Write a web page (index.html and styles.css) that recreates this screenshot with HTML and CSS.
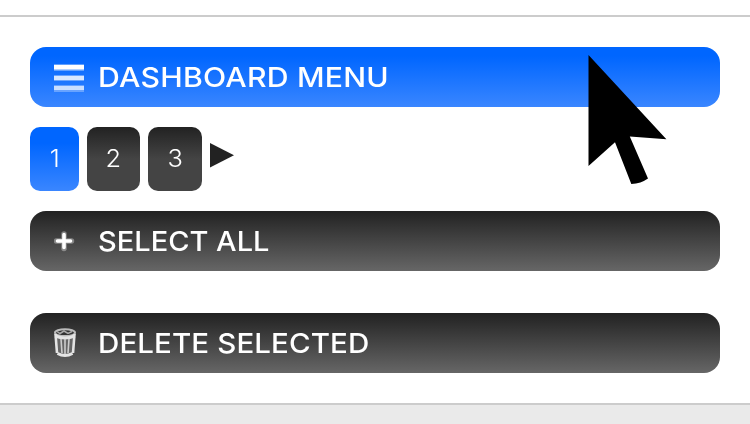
FILE: index.html
```html
<!DOCTYPE html>
<html lang="en">
<head>
    <meta charset="UTF-8">
    <meta name="viewport" content="width=device-width, initial-scale=1.0">
    <title>Dashboard</title>
    <link rel="stylesheet" href="styles.css">
</head>
<body>
    <div class="panel">
        <a class="bar bar-blue">
            <svg class="icon" width="32" height="32" viewBox="0 0 32 32">
                <g fill="#fff">
                    <rect x="0" y="3" width="30" height="7" opacity=".35"/>
                    <rect x="0" y="4" width="30" height="4.5"/>
                    <rect x="0" y="14" width="30" height="6" opacity=".35"/>
                    <rect x="0" y="15" width="30" height="4" opacity=".75"/>
                    <rect x="0" y="24" width="30" height="7" opacity=".3"/>
                    <rect x="0" y="25" width="30" height="4" opacity=".65"/>
                </g>
            </svg>
            <span class="label label-menu">DASHBOARD MENU</span>
        </a>
        <div class="pages">
            <a class="page page-1 current"><span>1</span></a>
            <a class="page page-2"><span>2</span></a>
            <a class="page page-3"><span>3</span></a>
            <svg class="next" width="24" height="25" viewBox="0 0 24 25">
                <path d="M0 0 24 12.2 0 24.5z" fill="#222"/>
            </svg>
        </div>
        <a class="bar bar-select">
            <svg class="icon" width="32" height="32" viewBox="0 0 32 32" fill="none" stroke="#fff" stroke-linecap="round">
                <path d="M2.5 16h15M10 9v14.5" stroke-width="5.5" opacity=".35"/>
                <path d="M3.5 16h13M10 9.5v13" stroke-width="3.6"/>
            </svg>
            <span class="label label-select">SELECT ALL</span>
        </a>
        <a class="bar">
            <svg class="icon icon-trash" width="32" height="32" viewBox="0 0 32 32" fill="none" stroke="#e4e4e4">
                <path d="M.8 6 3 27Q11 31.5 19 27L21.2 6Q11 10 .8 6z" fill="#666" stroke="none"/>
                <ellipse cx="11" cy="5.7" rx="10" ry="3.4" fill="#333" stroke="#bbb" stroke-width="2"/>
                <path d="M3 4.5 6 6.5 10 4 14 6.5 18 4.5" stroke="#aaa" stroke-width="1.5"/>
                <path d="M1.3 9Q11 13 20.7 9" stroke-width="3.2"/>
                <path d="M1.5 7 3 26M20.5 7 19 26" stroke-width="2.6"/>
                <path d="M3.5 26.5Q11 30.5 18.5 26.5" stroke-width="3"/>
                <path d="M7 12 8 26M11 12V27M15 12 14 26" stroke="#ccc" stroke-width="1.6"/>
            </svg>
            <span class="label label-delete">DELETE SELECTED</span>
        </a>
    </div>
    <svg class="cursor" width="80" height="132" viewBox="0 0 80 132">
        <path d="M.5 1 78.4 85.2 41.8 82.5 60 124.5Q53 129.5 43.3 130L27 88.2.5 112z"/>
    </svg>
</body>
</html>
```
FILE: styles.css
```css
* {
    box-sizing: border-box;
}
body {
    margin: 0;
    padding-top: 15px;
    height: 424px;
    overflow: hidden;
    background: linear-gradient(#fff 15px, #eaeaea 15px);
    font-family: Inter, "Liberation Sans", sans-serif;
}
.panel {
    height: 390px;
    padding: 30px 30px 0;
    background-color: #fff;
    border-top: 2px solid #ccc;
    border-bottom: 2px solid #ccc;
}
.bar {
    display: flex;
    align-items: center;
    height: 60px;
    padding-left: 24px;
    border-radius: 16px;
    background: linear-gradient(#222, #666);
    color: #fff;
}
.bar-blue {
    background: linear-gradient(#06f 15%, #3a86ff);
}
.bar-select {
    margin-bottom: 42px;
}
.icon {
    flex: none;
    margin-right: 12px;
}
.icon-trash {
    filter: blur(0.4px);
}
.label {
    font-size: 27.5px;
    font-weight: 500;
    line-height: 59px;
    white-space: nowrap;
    transform-origin: left;
}
.label-menu {
    letter-spacing: 0.2px;
    transform: scaleX(1.099);
}
.label-select {
    transform: scaleX(1.055);
}
.label-delete {
    letter-spacing: 0.1px;
    transform: scaleX(1.073);
}
.pages {
    display: flex;
    gap: 8px;
    margin: 20px 0;
}
.page {
    height: 64px;
    border-radius: 10px;
    background: linear-gradient(#222, #444 50%);
    color: #fff;
    font-size: 23.5px;
    font-weight: 300;
    line-height: 63px;
    text-align: center;
}
.page span {
    display: inline-block;
    transform: scaleX(1.08);
}
.page-1 {
    width: 49px;
}
.page-2 {
    width: 53px;
}
.page-3 {
    width: 54px;
}
.current {
    background: linear-gradient(#06f 25%, #3a86ff);
}
.next {
    margin-top: 16px;
}
.cursor {
    position: absolute;
    left: 588px;
    top: 54px;
}
```
